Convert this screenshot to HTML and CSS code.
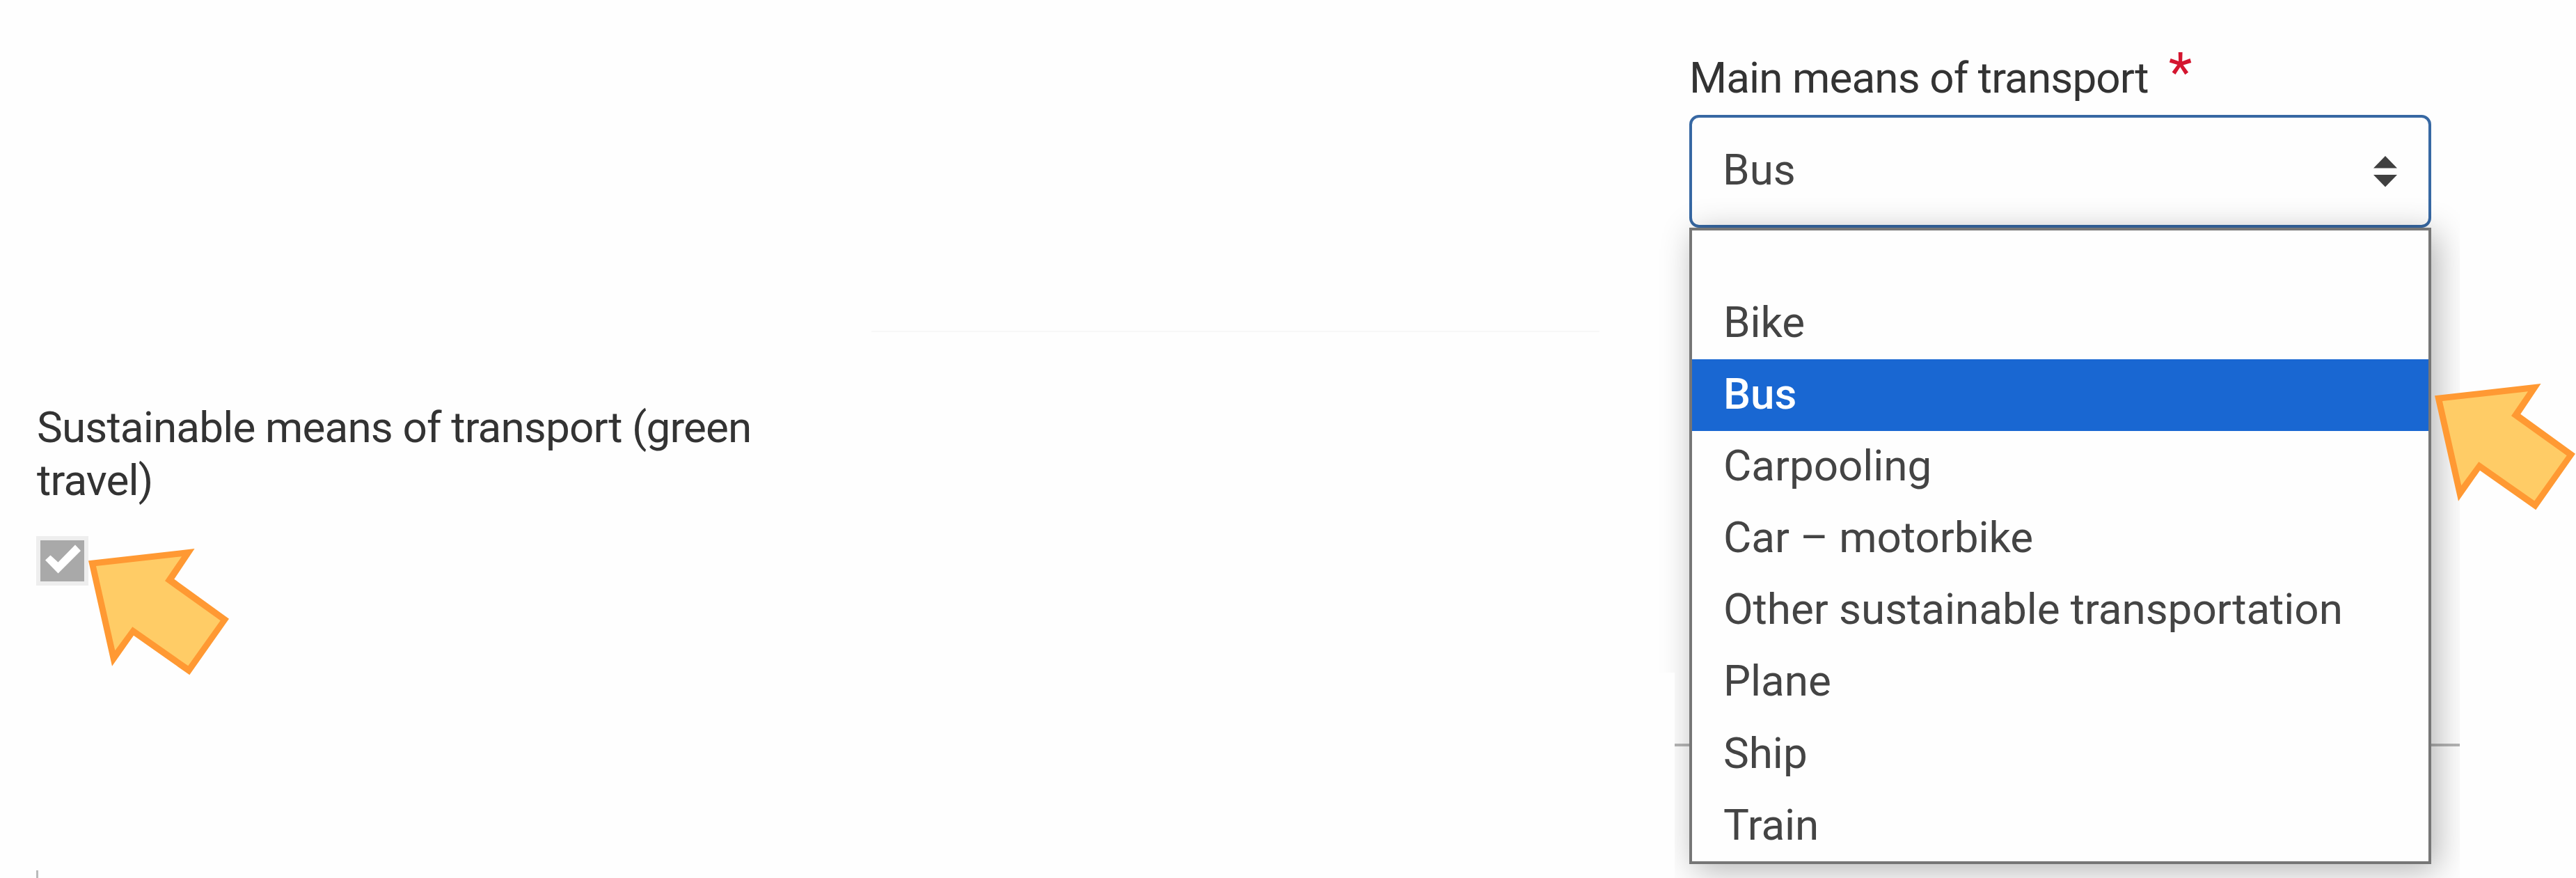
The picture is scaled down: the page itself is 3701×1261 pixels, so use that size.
FILE: index.html
```html
<!DOCTYPE html>
<html lang="en">
<head>
    <meta charset="UTF-8">
    <meta name="viewport" content="width=device-width, initial-scale=1.0">
    <title>Means of transport</title>
    <link rel="stylesheet" href="styles.css">
</head>
<body>
    <div class="page">
        <div class="green-travel">
            <div class="label">Sustainable means of transport (green<br>travel)</div>
            <div class="checkbox">
                <svg viewBox="0 0 62 58"><polygon points="7,28.5 14.5,21.5 25.5,31.5 50,6.5 58,15 25.5,47.5"/></svg>
            </div>
            <div class="tick-line"></div>
            <svg class="arrow arrow-left" viewBox="0 0 203 183">
                <polygon class="arrow-edge" points="0,17.3 152.6,0 123.3,43.7 202,100.7 145.3,181.3 65,124.7 34,168.7"/>
                <polygon class="arrow-fill" points="11,25 134,11.3 110,46.3 189.7,103.3 143.3,168.3 63.3,112.3 38.3,146.3"/>
            </svg>
        </div>

        <div class="middle">
            <hr class="faint-line">
        </div>

        <div class="transport">
            <div class="label">Main means of transport<span class="required">*</span></div>
            <div class="select">
                <span class="value">Bus</span>
                <svg class="caret" viewBox="0 0 34 45"><path d="M0 17.5 17 0 34 17.5ZM0 27h34L17 44.5Z"/></svg>
                <ul class="menu">
                    <li class="empty"></li>
                    <li>Bike</li>
                    <li class="selected">Bus</li>
                    <li>Carpooling</li>
                    <li>Car – motorbike</li>
                    <li>Other sustainable transportation</li>
                    <li>Plane</li>
                    <li>Ship</li>
                    <li>Train</li>
                </ul>
            </div>
            <hr class="section-line">
            <svg class="arrow arrow-right" viewBox="0 0 203 183">
                <polygon class="arrow-edge" points="0,17.3 152.6,0 123.3,43.7 202,100.7 145.3,181.3 65,124.7 34,168.7"/>
                <polygon class="arrow-fill" points="11,25 134,11.3 110,46.3 189.7,103.3 143.3,168.3 63.3,112.3 38.3,146.3"/>
            </svg>
        </div>
    </div>
</body>
</html>
```

FILE: styles.css
```css
* {
    box-sizing: border-box;
}
body {
    margin: 0;
    background-color: #fefefe;
    font-family: Roboto, sans-serif;
    font-size: 62px;
    color: #444;
}
.page {
    position: relative;
    display: flex;
    height: 1261px;
    overflow: hidden;
}
.label {
    height: 76px;
    line-height: 75.5px;
    letter-spacing: -0.9px;
    white-space: nowrap;
    color: #333;
}

/* left field */
.green-travel {
    display: flex;
    flex-direction: column;
    width: 1252px;
    padding: 576px 0 0 52px;
}
.green-travel .label {
    height: 151px;
    padding-left: 1px;
    letter-spacing: -0.85px;
}
.checkbox {
    width: 75px;
    height: 71px;
    margin-top: 43px;
    border: 6.5px solid #eee;
    background-color: #a9a9a9;
}
.checkbox svg {
    display: block;
    width: 62px;
    height: 58px;
    fill: #fff;
}
.tick-line {
    width: 3px;
    height: 11px;
    margin-top: auto;
    background-color: #bbb;
}

.middle {
    width: 1046px;
    padding-top: 475px;
}
.faint-line {
    height: 2px;
    margin: 0;
    border: none;
    background-color: #f7f7f7;
}

/* right field */
.transport {
    width: 1128px;
    margin-left: 108px;
    padding-top: 74px;
}
.transport .label {
    padding-left: 21px;
}
.required {
    margin-left: 29px;
    font-size: 78px;
    line-height: 0;
    vertical-align: 2px;
    color: #d4152f;
}
.select {
    position: relative;
    display: flex;
    align-items: center;
    justify-content: space-between;
    width: 1066px;
    height: 162px;
    margin: 15px 0 0 21px;
    padding: 0 45px 0 44px;
    border: 4px solid #3768a3;
    border-radius: 14px;
}
.value {
    padding-bottom: 5px;
}
.caret {
    width: 34px;
    height: 45px;
    fill: #404040;
}
.menu {
    position: absolute;
    top: 158px;
    left: -4px;
    width: 1066px;
    height: 914px;
    margin: 0;
    padding: 0;
    list-style: none;
    border: 4px solid #767676;
    background-color: #fefefe;
    box-shadow: 8px 8px 45px rgba(0, 0, 0, 0.3);
    clip-path: polygon(-60px -60px, 1107px -60px, 1107px 980px, -21px 980px, -21px 639px, -60px 639px);
}
.menu li {
    height: 103.1px;
    padding-left: 45px;
    line-height: 99px;
    letter-spacing: -0.05px;
    white-space: nowrap;
}
.menu .empty {
    height: 82px;
}
.menu .selected {
    background-color: #1967d2;
    color: #fff;
    font-weight: 500;
}
.section-line {
    height: 4px;
    margin: 741px 0 0;
    border: none;
    background-color: #b5b5b5;
}

/* pointers over the fields */
.arrow {
    position: absolute;
    width: 203px;
    height: 183px;
}
.arrow-left {
    top: 788px;
    left: 126.7px;
}
.arrow-right {
    top: 550.6px;
    left: 3498px;
}
.arrow-edge {
    fill: #ff9933;
}
.arrow-fill {
    fill: #ffcc66;
}
```
